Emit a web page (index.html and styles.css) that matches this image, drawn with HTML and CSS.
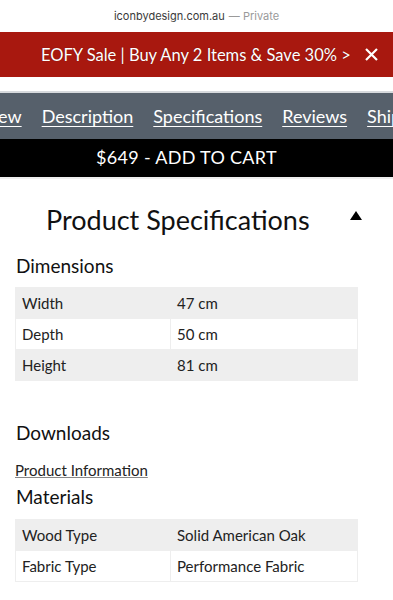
FILE: index.html
```html
<!DOCTYPE html>
<html>
<head>
    <title>Product Specifications - Icon By Design</title>
    <link rel="stylesheet" href="styles.css">
</head>
<body>
    <div class="url-bar">
        <span class="domain">iconbydesign.com.au</span> <span class="private">&mdash; Private</span>
    </div>

    <div class="promo-bar">
        <a href="#" class="promo-text">EOFY Sale | Buy Any 2 Items &amp; Save 30% &gt;</a>
        <span class="promo-close">
            <svg width="13" height="13" viewBox="0 0 13 13"><path d="M1 1L12 12M12 1L1 12" stroke="#fff" stroke-width="2.2"/></svg>
        </span>
    </div>
    <div class="header-gap"></div>

    <nav class="tab-nav">
        <div class="tab-track">
            <a href="#">Overview</a>
            <a href="#">Description</a>
            <a href="#">Specifications</a>
            <a href="#">Reviews</a>
            <a href="#">Shipping</a>
        </div>
    </nav>

    <button class="cart-bar">$649 - ADD TO CART</button>

    <section class="specs">
        <div class="specs-head">
            <h2>Product Specifications</h2>
            <svg class="toggle" width="12" height="9" viewBox="0 0 12 9"><path d="M6 0L12 9H0Z" fill="#000"/></svg>
        </div>

        <h3>Dimensions</h3>
        <table class="spec-table">
            <tr><td>Width</td><td>47 cm</td></tr>
            <tr><td>Depth</td><td>50 cm</td></tr>
            <tr><td>Height</td><td>81 cm</td></tr>
        </table>

        <h3 class="downloads">Downloads</h3>
        <a href="#" class="download-link">Product Information</a>

        <h3 class="materials">Materials</h3>
        <table class="spec-table">
            <tr><td>Wood Type</td><td>Solid American Oak</td></tr>
            <tr><td>Fabric Type</td><td>Performance Fabric</td></tr>
        </table>
    </section>
</body>
</html>
```

FILE: styles.css
```css
body {
    font-family: 'Lato', 'Open Sans', sans-serif;
    margin: 0;
    padding: 0;
    background-color: #fff;
    color: #111;
    width: 393px;
    overflow: hidden;
}
.url-bar {
    height: 32px;
    display: flex;
    justify-content: center;
    align-items: center;
    gap: 4px;
    font-family: 'Inter', sans-serif;
    font-size: 11px;
    color: #3a3a3a;
}
.url-bar .private {
    color: #9a9a9a;
}
.promo-bar {
    height: 45px;
    background-color: #a8180f;
    display: flex;
    align-items: center;
    padding-left: 41px;
    gap: 14px;
}
.promo-text {
    color: #fff;
    font-size: 16.5px;
    text-decoration: none;
    white-space: nowrap;
    text-shadow: 0 0 1px rgba(0, 0, 0, 0.4);
}
.promo-close {
    display: flex;
}
.header-gap {
    height: 14px;
    border-bottom: 2px solid #d7dadd;
}
.tab-nav {
    height: 46px;
    background-color: #56606b;
    overflow: hidden;
    display: flex;
    align-items: center;
}
.tab-track {
    display: flex;
    gap: 20px;
    margin-left: -55px;
    white-space: nowrap;
}
.tab-track a {
    color: #fff;
    font-size: 18px;
    text-decoration: underline;
    text-underline-offset: 3px;
    text-decoration-thickness: 1px;
}
.cart-bar {
    display: block;
    width: 100%;
    height: 40px;
    padding: 0 20px 2px 0;
    border: none;
    border-bottom: 2px solid #eee;
    background-color: #000;
    color: #fff;
    font-family: inherit;
    font-size: 18px;
    letter-spacing: 0.3px;
    box-sizing: border-box;
}
.specs {
    padding: 0 31px 0 15px;
}
.specs-head {
    display: flex;
    align-items: center;
    justify-content: space-between;
    padding: 24px 0 0 31px;
}
.specs-head h2 {
    margin: 0;
    font-size: 27px;
    font-weight: 400;
}
.toggle {
    margin-top: -8px;
}
h3 {
    margin: 18px 0 10px 1px;
    font-size: 19px;
    font-weight: 400;
}
.spec-table {
    width: 343px;
    border-collapse: collapse;
    font-size: 15px;
    color: #222;
}
.spec-table td {
    height: 30px;
    padding: 0 6px;
    border: 1px solid #eee;
}
.spec-table td:first-child {
    width: 142px;
}
.spec-table tr:nth-child(odd) td {
    background-color: #eee;
}
.downloads {
    margin-top: 40px;
}
.download-link {
    display: block;
    margin: 17px 0 0 0;
    color: #222;
    font-size: 15px;
    text-decoration-color: #888;
}
.materials {
    margin-top: 6px;
    margin-bottom: 11px;
}
```
